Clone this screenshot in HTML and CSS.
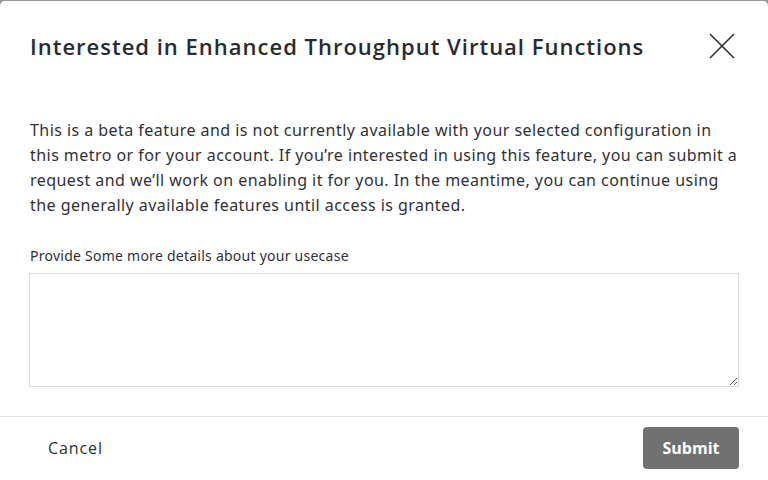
FILE: index.html
```html
<!DOCTYPE html>
<html>
<head>
<meta charset="utf-8">
<link rel="stylesheet" href="styles.css">
</head>
<body>
<div class="backdrop">
  <div class="modal">
    <div class="header">
      <h2 class="title">Interested in Enhanced Throughput Virtual Functions</h2>
      <button class="close" aria-label="Close">
        <svg width="26" height="26" viewBox="0 0 26 26"><path d="M1 1 L25 25 M25 1 L1 25" stroke="#2b2f36" stroke-width="1.6" fill="none"/></svg>
      </button>
    </div>
    <div class="body">
      <p class="text">This is a beta feature and is not currently available with your selected configuration in this metro or for your account. If you’re interested in using this feature, you can submit a request and we’ll work on enabling it for you. In the meantime, you can continue using the generally available features until access is granted.</p>
      <label class="label" for="uc">Provide Some more details about your usecase</label>
      <textarea id="uc" class="area"></textarea>
    </div>
    <div class="footer">
      <button class="cancel">Cancel</button>
      <button class="submit">Submit</button>
    </div>
  </div>
</div>
</body>
</html>
```
FILE: styles.css
```css
html, body { margin: 0; padding: 0; }
body { width: 768px; height: 480px; overflow: hidden; background: #9a9a9a; }
.backdrop { padding-top: 1px; height: 479px; box-sizing: border-box; }
.modal {
  background: #fff;
  height: 479px;
  border-radius: 5px 5px 0 0;
  display: flex;
  flex-direction: column;
  font-family: "Noto Sans", sans-serif;
  color: #2f3136;
}
.header {
  display: flex;
  align-items: center;
  justify-content: space-between;
  padding: 29px 30px 0 30px;
  height: 32px;
}
.title {
  margin: 0;
  font-family: "Open Sans", sans-serif;
  font-weight: 600;
  font-size: 22px;
  letter-spacing: 1px;
  color: #272b33;
  white-space: nowrap;
}
.close {
  background: none; border: 0; padding: 0; margin-right: 3px;
  width: 26px; height: 26px; display: flex;
}
.body { padding: 0 29px 0 29px; }
.text {
  margin: 56px 0 0 1px;
  font-size: 16px;
  line-height: 25px;
  letter-spacing: 0.45px;
  color: #2f3136;
}
.label {
  display: block;
  margin: 28px 0 8px 1px;
  font-size: 14px;
  letter-spacing: 0.25px;
  color: #2f3136;
}
.area {
  display: block;
  width: 100%;
  height: 114px;
  box-sizing: border-box;
  border: 1px solid #dcdcdc;
  border-radius: 0;
  margin: 0;
}
.footer {
  margin-top: 29px;
  border-top: 1px solid #e2e2e2;
  display: flex;
  justify-content: space-between;
  align-items: center;
  padding: 10px 29px 0 48px;
}
.cancel {
  background: none; border: 0; padding: 0;
  font-family: "Open Sans", sans-serif;
  font-weight: 500;
  font-size: 16px;
  letter-spacing: 0.9px;
  color: #2b2f36;
}
.submit {
  width: 96px; height: 42px;
  border: 0; border-radius: 4px;
  background: #717171;
  color: #fff;
  font-family: "Open Sans", sans-serif;
  font-weight: 700;
  font-size: 16px;
}
```
